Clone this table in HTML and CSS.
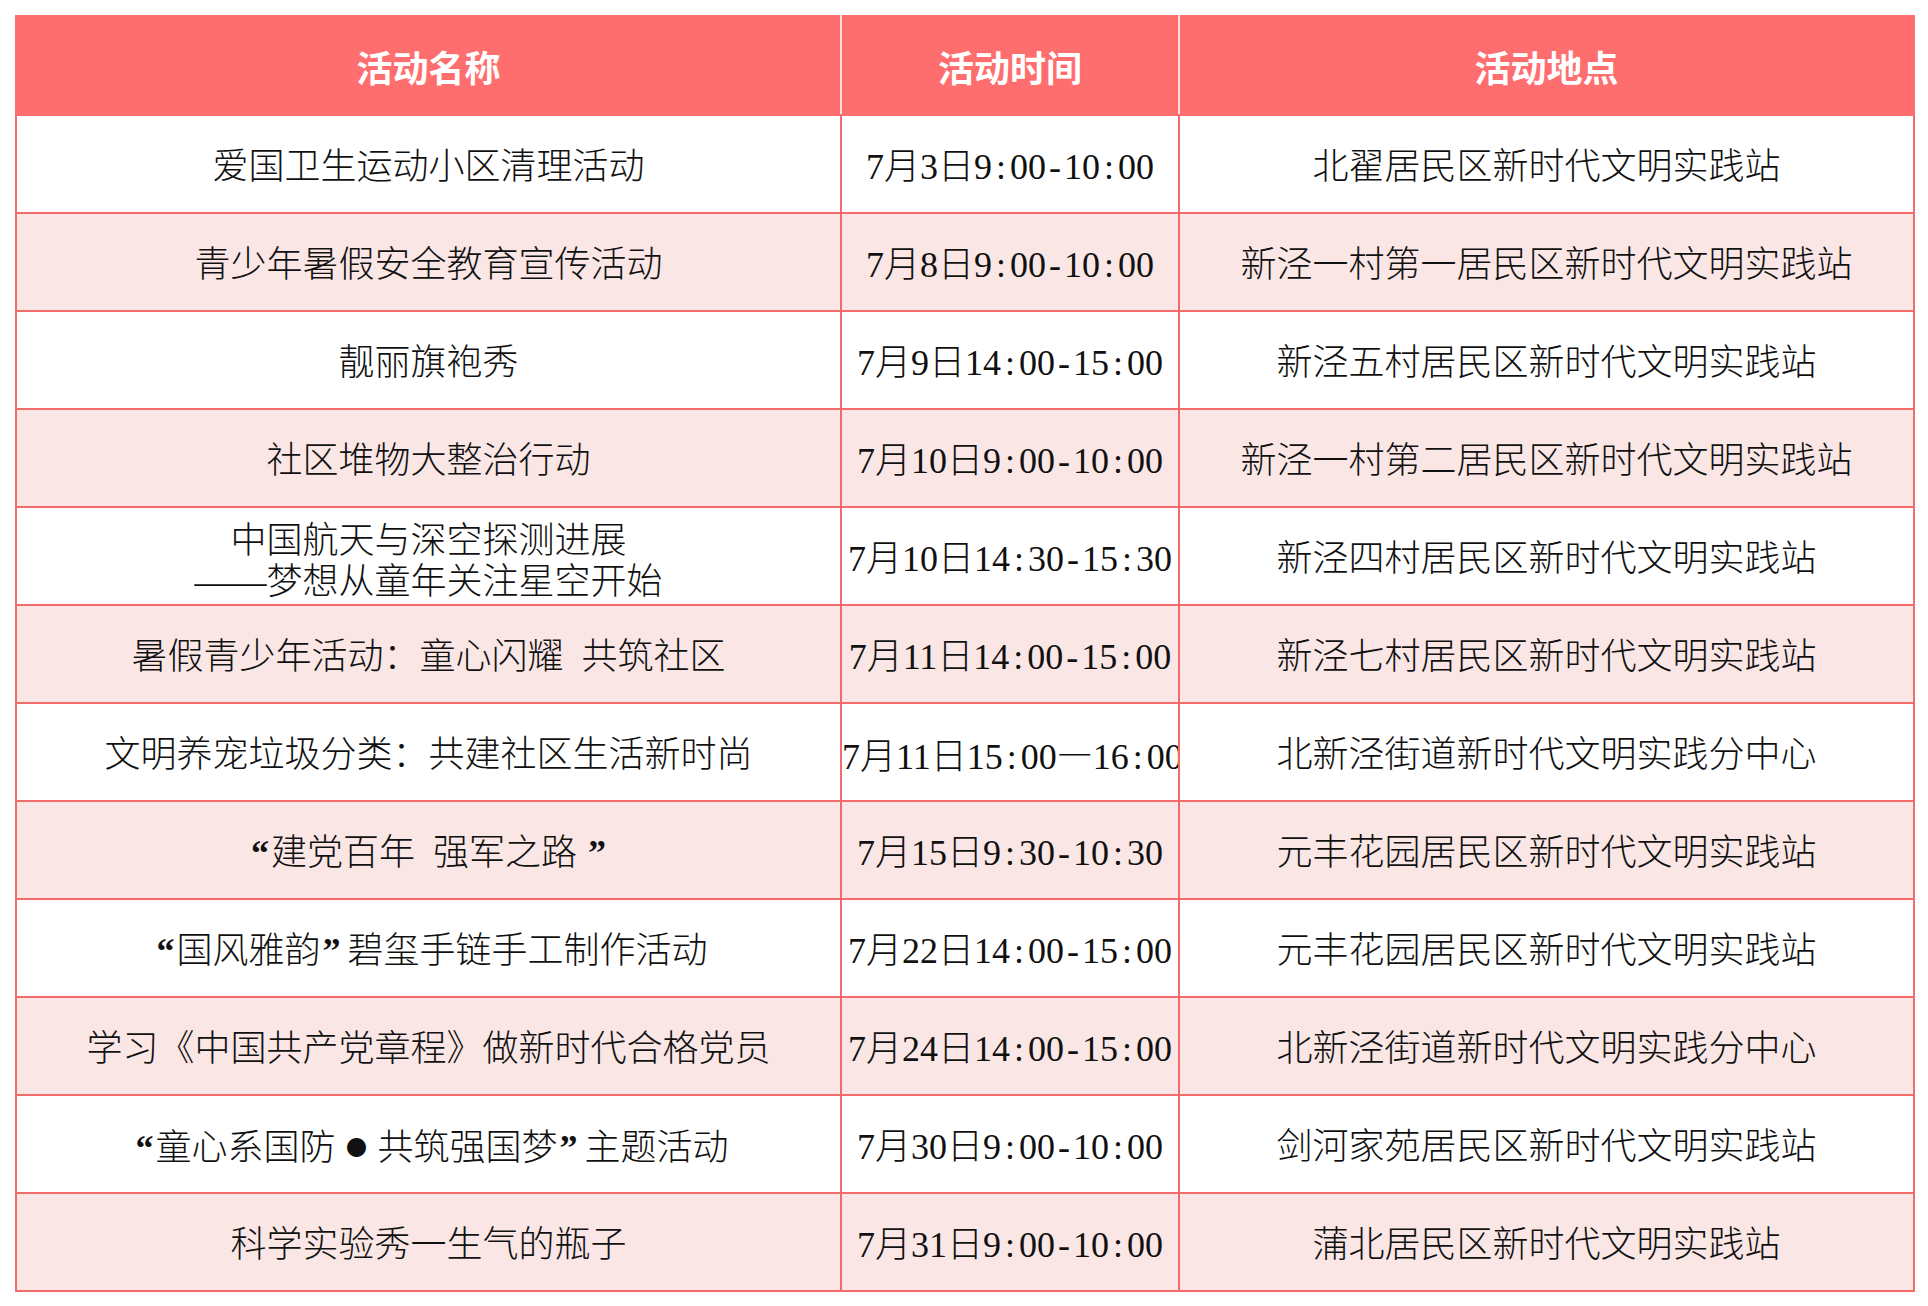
FILE: index.html
```html
<!DOCTYPE html>
<html lang="zh-CN">
<head>
<meta charset="utf-8">
<title>活动安排</title>
<link rel="stylesheet" href="styles.css">
</head>
<body>
<div class="page">
<table class="schedule">
<colgroup><col class="c-name"><col class="c-time"><col class="c-place"></colgroup>
<thead>
<tr><th>活动名称</th><th>活动时间</th><th>活动地点</th></tr>
</thead>
<tbody>
<tr><td class="name">爱国卫生运动小区清理活动</td><td class="time">7月3日9<span class="sep">:</span>00<span class="sep">-</span>10<span class="sep">:</span>00</td><td class="place">北翟居民区新时代文明实践站</td></tr>
<tr><td class="name">青少年暑假安全教育宣传活动</td><td class="time">7月8日9<span class="sep">:</span>00<span class="sep">-</span>10<span class="sep">:</span>00</td><td class="place">新泾一村第一居民区新时代文明实践站</td></tr>
<tr><td class="name">靓丽旗袍秀</td><td class="time">7月9日14<span class="sep">:</span>00<span class="sep">-</span>15<span class="sep">:</span>00</td><td class="place">新泾五村居民区新时代文明实践站</td></tr>
<tr><td class="name">社区堆物大整治行动</td><td class="time">7月10日9<span class="sep">:</span>00<span class="sep">-</span>10<span class="sep">:</span>00</td><td class="place">新泾一村第二居民区新时代文明实践站</td></tr>
<tr><td class="name two">中国航天与深空探测进展<br>——梦想从童年关注星空开始</td><td class="time">7月10日14<span class="sep">:</span>30<span class="sep">-</span>15<span class="sep">:</span>30</td><td class="place">新泾四村居民区新时代文明实践站</td></tr>
<tr><td class="name">暑假青少年活动：童心闪耀&ensp;共筑社区</td><td class="time">7月11日14<span class="sep">:</span>00<span class="sep">-</span>15<span class="sep">:</span>00</td><td class="place">新泾七村居民区新时代文明实践站</td></tr>
<tr><td class="name">文明养宠垃圾分类：共建社区生活新时尚</td><td class="time">7月11日15<span class="sep">:</span>00<span class="dash">—</span>16<span class="sep">:</span>00</td><td class="place">北新泾街道新时代文明实践分中心</td></tr>
<tr><td class="name"><span class="q-open">“</span>建党百年&ensp;强军之路 <span class="q-close">”</span></td><td class="time">7月15日9<span class="sep">:</span>30<span class="sep">-</span>10<span class="sep">:</span>30</td><td class="place">元丰花园居民区新时代文明实践站</td></tr>
<tr><td class="name"><span class="q-open">“</span>国风雅韵<span class="q-close">”</span>碧玺手链手工制作活动</td><td class="time">7月22日14<span class="sep">:</span>00<span class="sep">-</span>15<span class="sep">:</span>00</td><td class="place">元丰花园居民区新时代文明实践站</td></tr>
<tr><td class="name">学习《中国共产党章程》做新时代合格党员</td><td class="time">7月24日14<span class="sep">:</span>00<span class="sep">-</span>15<span class="sep">:</span>00</td><td class="place">北新泾街道新时代文明实践分中心</td></tr>
<tr><td class="name"><span class="q-open">“</span>童心系国防<span class="dot">●</span>共筑强国梦<span class="q-close">”</span>主题活动</td><td class="time">7月30日9<span class="sep">:</span>00<span class="sep">-</span>10<span class="sep">:</span>00</td><td class="place">剑河家苑居民区新时代文明实践站</td></tr>
<tr><td class="name">科学实验秀一生气的瓶子</td><td class="time">7月31日9<span class="sep">:</span>00<span class="sep">-</span>10<span class="sep">:</span>00</td><td class="place">蒲北居民区新时代文明实践站</td></tr>
</tbody>
</table>
</div>
</body>
</html>
```

FILE: styles.css
```css
html, body {
  margin: 0;
  padding: 0;
  background: #ffffff;
}

.page {
  padding: 15px 15px 0 15px;
}

.schedule {
  border-collapse: collapse;
  table-layout: fixed;
  width: 1898px;
  font-size: 36px;
  color: #111111;
}

.c-name { width: 825px; }
.c-time { width: 338px; }
.c-place { width: 735px; }

.schedule th {
  height: 97px;
  padding: 0;
  background: #ff6e6e;
  color: #ffffff;
  font-family: "Noto Sans CJK SC", sans-serif;
  font-weight: 700;
  font-size: 36px;
  text-align: center;
  vertical-align: middle;
  border: 2px solid #ff6e6e;
}

.schedule th + th {
  border-left-color: #f9dcdc;
}

.schedule th:not(:last-child) {
  border-right-color: #f9dcdc;
}

.schedule td {
  height: 90px;
  padding: 6px 0 0 0;
  border: 2px solid #f36c6c;
  text-align: center;
  vertical-align: middle;
  white-space: nowrap;
  overflow: hidden;
  line-height: 42px;
}

.schedule tbody tr:nth-child(even) td {
  background: #f9e6e5;
}

.name, .place {
  font-family: "Liberation Serif", "Noto Sans CJK SC", serif;
  font-weight: 300;
}

.schedule td.two {
  height: 84px;
  padding-top: 12px;
  line-height: 41px;
}

.time {
  font-family: "Liberation Serif", "Noto Sans CJK SC", serif;
  font-weight: 300;
}

.sep {
  display: inline-block;
  width: 0.5em;
  text-align: center;
}

.dash {
  font-family: "Noto Sans CJK SC", sans-serif;
}

.q-open,
.q-close {
  display: inline-block;
  width: 0.75em;
  font-weight: 700;
}

.q-open {
  text-align: right;
  padding-right: 2px;
  box-sizing: border-box;
}

.q-close {
  text-align: left;
  padding-left: 2px;
  box-sizing: border-box;
}

.dot {
  display: inline-block;
  width: 42px;
  text-align: center;
  font-family: "Noto Sans CJK SC", sans-serif;
  font-size: 21px;
  vertical-align: 5px;
}
```
